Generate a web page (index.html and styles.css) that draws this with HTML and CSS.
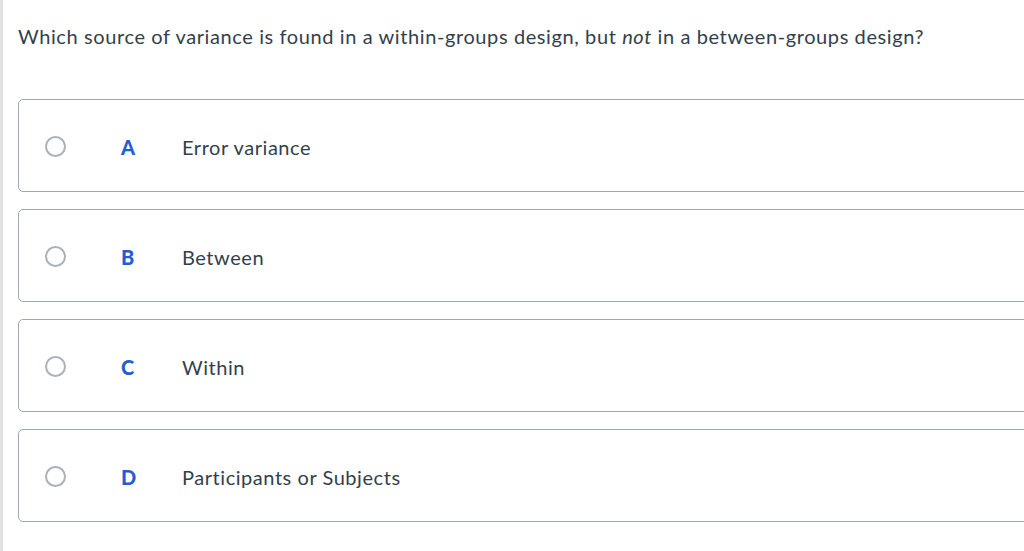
FILE: index.html
```html
<!DOCTYPE html>
<html>
<head>
<meta charset="utf-8">
<link rel="stylesheet" href="styles.css">
</head>
<body>
<div class="page">
  <p class="question">Which source of variance is found in a within-groups design, but <em>not</em> in a between-groups design?</p>
  <div class="options">
    <div class="option"><span class="radio"></span><span class="letter">A</span><span class="label">Error variance</span></div>
    <div class="option"><span class="radio"></span><span class="letter">B</span><span class="label">Between</span></div>
    <div class="option"><span class="radio"></span><span class="letter">C</span><span class="label">Within</span></div>
    <div class="option"><span class="radio"></span><span class="letter">D</span><span class="label">Participants or Subjects</span></div>
  </div>
</div>
</body>
</html>
```
FILE: styles.css
```css
html, body {
  margin: 0;
  padding: 0;
  background: #fff;
  height: 100%;
  overflow: hidden;
}
.page {
  border-left: 3px solid #e2e2e2;
  padding-left: 15px;
  height: 100%;
  box-sizing: border-box;
  font-family: Lato, "Open Sans", sans-serif;
  color: #333f4c;
}
.question {
  margin: 0;
  padding-top: 24px;
  font-size: 20px;
  line-height: 24px;
  letter-spacing: 0.6px;
}
.options {
  margin-top: 51px;
  margin-right: -20px;
  display: flex;
  flex-direction: column;
  gap: 17px;
}
.option {
  height: 93px;
  box-sizing: border-box;
  border: 1px solid #9ea9b5;
  border-radius: 5px;
  display: flex;
  align-items: center;
  padding-left: 26px;
  padding-top: 2px;
}
.radio {
  width: 21px;
  height: 21px;
  box-sizing: border-box;
  border: 2px solid #a9b1b9;
  border-radius: 50%;
  flex: none;
}
.letter {
  width: 20px;
  margin-left: 55px;
  font-weight: 900;
  font-size: 20px;
  color: #1f5fd3;
}
.label {
  margin-left: 41px;
  font-size: 20px;
  letter-spacing: 0.55px;
}
```
